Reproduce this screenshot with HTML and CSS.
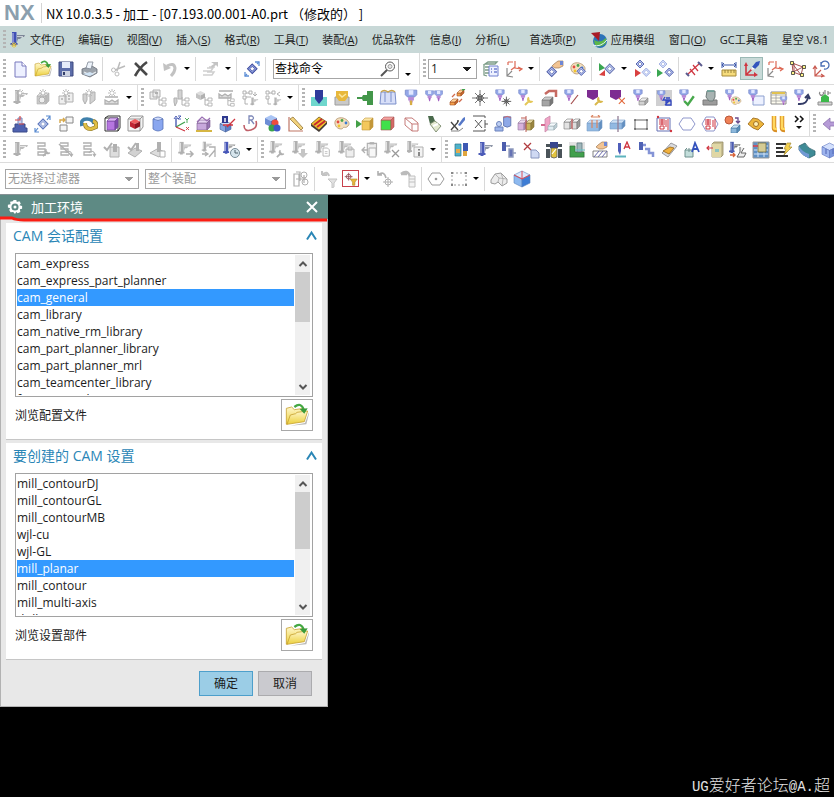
FILE: index.html
```html
<!DOCTYPE html>
<html lang="zh-CN">
<head>
<meta charset="utf-8">
<title>NX 10.0.3.5 - 加工</title>
<link rel="stylesheet" href="styles.css">
</head>
<body>
<header class="titlebar">
  <span class="brand">NX</span>
  <h1 class="title">NX 10.0.3.5 - 加工 - [07.193.00.001-A0.prt （修改的） ]</h1>
</header>

<nav class="menubar">
  <span class="grip"></span>
  <span data-icon="mill"></span>
  <a href="#">文件(<u>F</u>)</a>
  <a href="#">编辑(<u>E</u>)</a>
  <a href="#">视图(<u>V</u>)</a>
  <a href="#">插入(<u>S</u>)</a>
  <a href="#">格式(<u>R</u>)</a>
  <a href="#">工具(<u>T</u>)</a>
  <a href="#">装配(<u>A</u>)</a>
  <a href="#">优品软件</a>
  <a href="#">信息(<u>I</u>)</a>
  <a href="#">分析(<u>L</u>)</a>
  <a href="#" class="spaced">首选项(<u>P</u>)</a>
  <a href="#" class="with-icon"><span data-icon="globe"></span>应用模组</a>
  <a href="#">窗口(<u>O</u>)</a>
  <a href="#">GC工具箱</a>
  <a href="#">星空 V8.1</a>
</nav>

<div class="bar bar-tall">
  <div class="tools" data-tools=":: new open save print | cut delete | undo v | redo v | find |"></div>
  <div class="search">
    <input type="text" value="查找命令" aria-label="查找命令">
    <button type="button" aria-label="查找" data-icon="lens"></button>
  </div>
  <div class="tools" data-tools="w :::"></div>
  <select class="layer" aria-label="图层"><option>1</option></select>
  <div class="tools" data-tools="layers csys v | handgem paintgem | playgem v redgem greengem | distance v ruler axespick* csys nodes axesturn"></div>
</div>

<div class="bar">
  <div class="tools" data-tools=":: gmillnew gboxnew gpartsnew gtoolnew gopnew v ::: gparttree gtooltree gcubetree gruletree glinkmill glinkcube v ::: insert pocket plug booklet holder holders orange mesh holdmesh holdwrench redcube holdline tagwrench tagx holdcube holdtext holdcheck machine holdpaint holdsheet sheet holdturn greenbase"></div>
</div>

<div class="bar">
  <div class="tools" data-tools=":: column gembox linkbox swirl purplebox redbox cylinder axes3 purpleblock notebox hook colors angle slab palette greencube greenface sketch lamp xpen xbracket cylinders split plane cubes cutwide cutmid rect cutred hexagon hexred circlecube goldflange goldtubes more* ::: back"></div>
</div>

<div class="bar">
  <div class="tools" data-tools=":: gmill gcoil gcoilx gcoilturn gcheckpath gcheck gpath | gmillgo gmillplay millclock v ::: gmillturn gmilldown gmillcopy gmillpaste gpaste gmillx gmillinfo v ::: bluetool mill millstep xpage rig greenframe handhatch needlea bluestep goldplate boxa oldbox bluepage sheetbox lightning teal bluecube"></div>
</div>

<div class="bar bar-filter">
  <select class="filter" aria-label="选择过滤器"><option>无选择过滤器</option></select>
  <select class="filter wide" aria-label="选择范围"><option>整个装配</option></select>
  <div class="tools" data-tools="glinkasm | gfunnel snap* v gturnpoint gbrush | ghex gdash v | ghouse halfcube"></div>
</div>

<main class="canvas">
  <section class="dialog" aria-label="加工环境">
    <header class="dialog-head">
      <span data-icon="gear"></span>
      <h2>加工环境</h2>
      <button type="button" class="plain" aria-label="关闭" data-icon="close"></button>
      <svg class="marker" viewBox="0 0 328 6" preserveAspectRatio="none" aria-hidden="true"><path d="M0 2H12Q16 4 24 4H327" fill="none" stroke="#fb1d12" stroke-width="3"/></svg>
    </header>

    <div class="panel">
      <div class="panel-head"><h3>CAM 会话配置</h3><button type="button" class="plain" aria-label="折叠" data-icon="up"></button></div>
      <div class="listbox">
        <select size="8" aria-label="CAM 会话配置">
          <option>cam_express</option>
          <option>cam_express_part_planner</option>
          <option selected>cam_general</option>
          <option>cam_library</option>
          <option>cam_native_rm_library</option>
          <option>cam_part_planner_library</option>
          <option>cam_part_planner_mrl</option>
          <option>cam_teamcenter_library</option>
          <option>feature_machining</option>
        </select>
        <div class="scroll"><span data-icon="sup"></span><i class="thumb"></i><span data-icon="sdown"></span></div>
      </div>
      <div class="browse"><label for="b1">浏览配置文件</label><button type="button" id="b1" data-icon="folder"></button></div>
    </div>

    <div class="panel">
      <div class="panel-head"><h3>要创建的 CAM 设置</h3><button type="button" class="plain" aria-label="折叠" data-icon="up"></button></div>
      <div class="listbox">
        <select size="8" aria-label="要创建的 CAM 设置">
          <option>mill_contourDJ</option>
          <option>mill_contourGL</option>
          <option>mill_contourMB</option>
          <option>wjl-cu</option>
          <option>wjl-GL</option>
          <option selected>mill_planar</option>
          <option>mill_contour</option>
          <option>mill_multi-axis</option>
          <option>drill</option>
        </select>
        <div class="scroll"><span data-icon="sup"></span><i class="thumb long"></i><span data-icon="sdown"></span></div>
      </div>
      <div class="browse"><label for="b2">浏览设置部件</label><button type="button" id="b2" data-icon="folder"></button></div>
    </div>

    <footer class="actions">
      <button type="button" class="ok">确定</button>
      <button type="button">取消</button>
    </footer>
  </section>
  <p class="signature"><span>UG</span>爱好者论坛<span>@A.</span>超</p>
</main>
<script src="icons.js"></script>
</body>
</html>
```
FILE: styles.css
```css
* { box-sizing: border-box; }
html, body { height: 100%; }
body {
  margin: 0;
  display: flex;
  flex-direction: column;
  overflow: hidden;
  background: #fff;
  color: #1c1c1c;
  font: 12px/17px "Open Sans", "Noto Sans CJK SC", sans-serif;
}
h1, h2, h3, p { margin: 0; font-weight: 400; }
button, input, select { font: inherit; color: inherit; border-radius: 0; }
button { padding: 0; }
svg { display: block; flex: none; }
[data-icon] { display: flex; align-items: center; justify-content: center; flex: none; }

.titlebar { display: flex; align-items: center; height: 26px; flex: none; padding-left: 4px; }
.brand {
  width: 38px; height: 20px; line-height: 20px;
  border-right: 1px solid #d4d4d4;
  color: #8b9fae;
  font-family: "Liberation Sans", sans-serif;
  font-weight: 700; font-size: 22px;
}
.title { margin-left: 4px; font-size: 13px; font-family: "Noto Sans CJK SC", sans-serif; color: #000; white-space: pre; }

.menubar {
  display: flex; align-items: center; flex: none;
  height: 27px;
  background: #c8d8d7;
  font-size: 11px;
  white-space: nowrap; overflow: hidden;
}
.menubar a { color: inherit; text-decoration: none; margin-right: 14px; flex: none; }
.menubar > [data-icon] { width: 18px; margin: 0 4px 0 0; }
.menubar .spaced { margin-left: 6px; }
.menubar a.with-icon { display: flex; align-items: center; gap: 3px; }

.bar {
  display: flex; align-items: center; flex: none;
  height: 26px;
  border-bottom: 1px solid #dcdcdc;
  overflow: hidden;
}
.bar-tall { height: 32px; }
.bar-filter { height: 32px; padding-left: 5px; border-bottom-color: #879195; }
.tools { display: flex; align-items: center; align-self: stretch; flex: none; }
.tool {
  display: flex; align-items: center; justify-content: center;
  width: 23px; height: 23px;
  border: 0; background: none;
}
.tool.on { background: #c8dad8; border: 1px solid #9bb9b5; }
.tool.more { width: 17px; }
.bar-filter .tool.on { width: 17px; height: 17px; margin: 0 2px; background: #fff; border-color: #c8414b; }
.drop { display: flex; justify-content: center; align-items: center; width: 12px; height: 23px; border: 0; background: none; }
.drop::after { content: ""; border: 3px solid transparent; border-top-color: #000; border-bottom: 0; }
.drop.low { width: 18px; height: 11px; align-self: flex-end; margin-bottom: 4px; }
.sep { width: 1px; margin: 0 2px; height: 24px; background: #d8d8d8; }
.bar-tall .sep { margin-right: 3px; }
.grip {
  width: 3px; height: 20px; margin: 0 2px 0 3px; flex: none;
  background: repeating-linear-gradient(#b4b4b4 0 2px, transparent 2px 4px);
}
.edge { align-self: stretch; width: 1px; margin-left: 2px; background: #dcdcdc; }

.search { display: flex; align-items: center; width: 126px; height: 20px; margin-left: 4px; border: 1px solid #a6a6a6; flex: none; }
.search input { flex: 1; min-width: 0; border: 0; padding: 0 1px; background: none; outline: 0; color: #000; }
.search button { width: 20px; border: 0; background: none; }
select.layer, select.filter {
  appearance: none;
  height: 20px; padding: 0 2px; flex: none;
  border: 1px solid #a6a6a6;
  background-color: #fff;
  background-image: linear-gradient(to bottom right, currentColor 50%, transparent 51%), linear-gradient(to bottom left, currentColor 50%, transparent 51%);
  background-repeat: no-repeat;
  background-size: 4px 4px;
  background-position: right 5px center, right 9px center;
}
select.layer { width: 49px; margin-right: 2px; }
select.filter { width: 134px; margin-right: 6px; color: #9a9a9a; }
select.filter.wide { width: 141px; margin-right: 3px; }

.canvas { flex: 1; position: relative; min-height: 0; background: #000; }
.dialog { width: 328px; background: #e8e8e8; border: 1px solid #b2b2b2; border-top: 0; }
.dialog-head {
  position: relative;
  display: flex; align-items: center;
  height: 24px; margin: 0 -1px 4px; padding: 0 7px;
  background: #5e8a84; color: #fff;
}
.dialog-head h2 { flex: 1; margin-left: 8px; font-size: 13px; }
.marker { position: absolute; left: 0; bottom: -3px; width: 100%; height: 6px; }
.plain { border: 0; background: none; }
.panel { margin: 0 5px 3px; padding: 0 9px 8px; background: #fff; border-bottom: 1px solid #c6c6c6; }
.panel-head { display: flex; align-items: center; justify-content: space-between; height: 30px; margin: 0 -7px 0 -2px; padding-bottom: 5px; }
.panel-head h3 { font-size: 14px; line-height: 22px; color: #2a86b6; }
.listbox { display: flex; height: 144px; border: 1px solid #a2a2a2; padding: 1px; }
.listbox select { flex: 1; height: 140px; min-width: 0; border: 0; outline: 0; padding: 0; overflow: hidden; background: #fff; }
.listbox option { height: 17px; min-height: 17px; padding: 0; line-height: 17px; color: #1c1c1c; }
.listbox option:checked { background: #3399ff linear-gradient(#3399ff, #3399ff); color: #fff; -webkit-text-fill-color: #fff; }
.scroll { display: flex; flex-direction: column; width: 15px; margin: 0 1px; background: #f0f0f0; }
.scroll span { height: 17px; }
.scroll span:last-child { margin-top: auto; }
.thumb { height: 50px; background: #cdcdcd; }
.thumb.long { height: 57px; }
.browse { display: flex; align-items: center; justify-content: space-between; margin-top: 2px; }
.browse button { width: 32px; height: 32px; border: 1px solid #a8a8a8; background: #fff; }
.actions { display: flex; justify-content: flex-end; gap: 5px; padding: 8px 15px 10px; }
.actions button { width: 54px; height: 25px; background: #cacacf; border: 1px solid #ababae; }
.actions .ok { background: #9bcde6; border-color: #4d9fcb; }
.signature {
  position: absolute; right: 4px; bottom: 2px;
  font-size: 16px; font-weight: 300; line-height: 20px; color: #e2e2e2;
}
.signature span { font: 14px "Liberation Mono", monospace; }
```
FILE: icons.js
```js
const p = (d, fill = 'none', stroke = 'none', w = 1) =>
  `<path d="${d}" fill="${fill}" stroke="${stroke}" stroke-width="${w}"/>`;
const g = (x, y, s, body) => `<g transform="translate(${x} ${y}) scale(${s})">${body}</g>`;
const c = (x, y, r, fill, stroke = 'none') => `<circle cx="${x}" cy="${y}" r="${r}" fill="${fill}" stroke="${stroke}"/>`;
const G = '#b0b0b0', L = '#dedede', R = '#cf3540', N = '#4c5aa6';

/* Shared parts */
const cube = (x, y, s, t, l, r, k = 'none') =>
  p(`M${x} ${y + s / 4}L${x + s / 2} ${y}L${x + s} ${y + s / 4}L${x + s / 2} ${y + s / 2}z`, t, k, .6) +
  p(`M${x} ${y + s / 4}L${x + s / 2} ${y + s / 2}V${y + s}L${x} ${y + s * .75}z`, l, k, .6) +
  p(`M${x + s} ${y + s / 4}L${x + s / 2} ${y + s / 2}V${y + s}L${x + s} ${y + s * .75}z`, r, k, .6);
const block = (x, y, w, h, f, t, r, k) =>
  p(`M${x} ${y + 3}h${w}v${h}h${-w}z`, f, k, .6) + p(`M${x} ${y + 3}l3 -3h${w}l-3 3z`, t, k, .6) +
  p(`M${x + w} ${y + 3}l3 -3v${h}l-3 3z`, r, k, .6);
/* Cutter body with its side arm */
const mill = (a, b) => p('M4 1h4.500v12H4z', a) + p('M5 2v10', 'none', '#ffffff', .7) +
  p('M9 4h8l-1 2h-2l-2 2h-2l-1 3z', b) + p('M9 5.500h6', 'none', '#ffffff', .6) + p('M2.500 12h7v2h-2v1h-3v-1h-2z', a);
const spark = (k = '#b5b5b5') => p('M9 0v8M5 4h8M6 1l6 6M12 1L6 7', 'none', k, .9) + c(9, 4, 1.3, '#fff');
const holder = p('M2 1h10v4l-2 2H4L2 5z', '#93a7e8', '#7486c8', .7) + p('M5 1h4v4H5z', '#e0e7ff') + p('M4.500 7h5v3h-5z', '#b78bd8') + p('M5.500 10h3l-1 4h-1z', '#a561c4');
const wrench = k => p('M1 9l5-5M5 1.5a2.5 2.5 0 1 0 3.5 3.5', 'none', k, 2);
const tree = k => p('M1 0v8h4M1 3h4', 'none', k) + p('M4 1h4v3H4zM4 6h4v3H4z', '#fff', k, .9);
const gem = (k = N, f = '#b4c2f2') => p('M5 0l5 5-5 5-5-5z', f, k, 1.1) + p('M5 2.500l2.500 2.500L5 7.500 2.500 5z', '#fff', k, .8);
const page = k => p('M0 0h5l2 2v7H0z', '#fff', k) + p('M2 4h3M2 6h3', 'none', k, .8);
const ex = k => p('M1 1l7 7M8 1L1 8', 'none', k, 1.3);
const turn = k => p('M1 5a4 4 0 0 1 7 0v3M6 6l2 3 2-3', 'none', k, 1.3);
const check = k => p('M1 5l3 3 5-7', 'none', k, 2);
const coil = p('M3 2h8v3H4v3h7v3H4v3h8', 'none', G, 1.3);
const pal = p('M2 9C1 4 6 2 10 3s8 5 5 8-4 0-5 2-7 1-8-4z', '#f3dfbe', '#b2936c', .8) +
  c(5, 7, 1.4, '#e54b42') + c(9, 5.500, 1.400, '#4ca64b') + c(13, 8, 1.4, '#3d7bd3') + c(6, 11, 1.400, '#f0c52f');
const hand = p('M8 4l4-3h5v5l-4 2H9l-3-2z', '#f2c493', '#a27a52', .7) + p('M14 1h3v4h-3z', '#6e87d5');
const folder = '<defs><linearGradient id="paper" x2="0" y2="1"><stop stop-color="#fff7cb"/><stop offset="1" stop-color="#ecd03c"/></linearGradient></defs>' +
  p('M4 17l11-2 3-8v1l-2 8z', '#b9b9b9') +
  p('M1 16V4l4-1 2 2 7-1v4z', 'url(#paper)', '#c5a02e', .6) + p('M1.500 16L4 9l4-1 1-1 8-1-2.500 8z', 'url(#paper)', '#c5a02e', .6) +
  p('M7 3q5-4 7 2', 'none', '#45a843', 1.7) + p('M11 4.500l6-.5-2.500 4z', '#3a9b3b');
const gm = mill(G, '#bdbdbd');
const clip = p('M2 2h8v10H2z', '#eee', G) + p('M4 1h4v2H4z', G);

const icons = {
  mill: mill('#4c5cb8', '#8f97a8'),
  millmenu: mill('#3f4fb5', '#7d8697') + p('M6 11v6M3 14h6M4 12l4 4M8 12l-4 4', 'none', '#e8c83e', .9),
  globe: c(10, 10, 7, '#2c72b8') + p('M4 9q6 4 12-2v5q-6 6-11 2z', '#5eb748') + p('M3 14q7 3 14-5', 'none', '#dff0ff', 1) + p('M1 2l9-1-1 9-3-3z', '#a91c27'),
  lens: c(11, 6.5, 4.500, '#fff', '#555') + p('M8 10l-6 6', 'none', '#555', 2) + c(11, 6.500, 2, '#e8e8e8', '#999'),
  new: p('M4 2h7l4 4v11H4z', '#edf0ff', '#7878bd') + p('M11 2v4h4', '#fff', '#7878bd'),
  open: folder, folder,
  save: p('M2 2h14v14H2z', '#5c6da9', '#3e4b80') + p('M5 2h8v6H5z', '#e6ecfa') + p('M5 11h8v5H5z', '#cdd3e2') + p('M6 12h2v3H6z', '#34406b'),
  print: p('M2 9l10-3 5 3v4l-7 4-8-3z', '#9ca3ab', '#696f78', .8) + p('M6 8l2-6h5l-2 7z', '#eef4fb', '#7d8793', .8) + p('M4 12l6 3 6-3', 'none', '#e8ecef', 1.3) + p('M3 14l7-2 4 2-5 2z', '#d1e4f5'),
  cut: p('M11 2L8 11M16 6L6 10', 'none', '#bbb', 1.5) + c(4.500, 10, 2, 'none', '#bbb') + c(8, 14, 2, 'none', '#bbb'),
  delete: p('M3 3l12 12M15 2Q8 7 3 16', 'none', '#484848', 2.600),
  undo: p('M6 6q7-4 8 2 0 4-4 8', 'none', '#c2c2c2', 3) + p('M2 3l1 8 7-3z', '#c2c2c2'),
  redo: p('M1 15h9l2-3H5M1 11h8l2-3H5M7 7h6', 'none', '#cfcfcf', 1.500) + p('M9 2h7v5l-2-2-4 3-1-2 3-2z', '#c4c4c4'),
  find: g(4.500, 4, .95, gem('#3c4a9c', '#8d9ee0')) + p('M2 12v4h4M16 6V2h-4', 'none', '#5d8ed6', 1.300) + p('M2 16l2-2M16 2l-2 2', 'none', '#5d8ed6', 1.300),
  layers: p('M3 4l3-2h9l-2 2zM3 7h5M3 10h4M3 13h4M2 4v11l3 1', 'none', '#7d9d88', 1.300) + p('M7 6h9v10H7z', '#edf1ff', '#7080cf') + p('M9 9h1M12 9h3M9 12h1M12 12h3', 'none', '#7080cf', 1.500),
  csys: p('M3 2h5M3 2v3M10 1v7l6 1M10 7l-4 3M13 7l4 2-3 2', 'none', '#dd6955', 1.200) + p('M2 8v8l6 1M2 16l5-5', 'none', '#8a8a8a', 1.200),
  handgem: g(1, 7, .95, gem()) + hand,
  paintgem: pal + g(8, 7, .85, gem()),
  playgem: p('M1 3l6 5-6 3z', '#3aa651') + p('M1 15l6-5v6z', '#d94040') + g(7, 4, .95, gem('#6371ae', '#c3cef5')),
  redgem: g(3, 0, .8, gem()) + p('M2 9l6 4-6 4z', '#d94040') + g(9, 8, .85, gem('#9dacdf', '#d2dcfa')),
  greengem: g(3, 0, .8, gem('#9dacdf', '#d2dcfa')) + p('M1 9l6 4-6 4z', '#3aa651') + g(9, 8, .85, gem()),
  distance: p('M3 14L15 3M5 9l5 6M8 5l5 6', 'none', R, 1.200) + p('M1 13l3 3M13 2l4 4', 'none', '#5c5c8f', 2),
  ruler: p('M2 5h14M2 2v6M16 2v6M4 3L2 5l2 2M14 3l2 2-2 2', 'none', '#3b56a9') + p('M2 10h14v6H2z', '#f6dc7c', '#a78b39') + p('M5 10v3M8 10v3M11 10v3M14 10v3', 'none', '#836e2d', .8),
  axespick: p('M3 5v10h9M3 15l6-6', 'none', R, 1.600) + p('M1 6l2-4 2 4zM11 12l4 3-4 2z', R) + p('M9 7l4-5 4-1-1 4-4 4z', '#3254bd') + p('M9 7l3 2-4 1z', '#fff'),
  nodes: p('M3 3l11 4-2 8-8-3zM3 3l9 12M4 12L14 7M5 3v9', 'none', '#a85252') + [[3, 3], [15, 7], [13, 15], [4, 13]].map(q => p(`M${q[0] - 1.500} ${q[1] - 1.500}h3v3h-3z`, '#fff58a', '#333', .8)).join(''),
  axesturn: p('M3 7v9h8M3 16l6-6M1 9l2-3 2 3M9 14l3 2-3 1', 'none', '#c9594f', 1.200) + p('M9 5a4 4 0 1 1 3 4M9 2v4h4', 'none', '#4b6fb5', 1.300),
  gmillnew: gm + spark(), gboxnew: block(3, 4, 9, 8, '#c9c9c9', L, '#bbb', G) + c(8, 11, 3, '#eee', G) + spark(),
  gpartsnew: p('M2 7h7v8H2zM8 4h8v9H8z', '#eee', G) + p('M4 10h2M11 7h2M11 10h2', 'none', G, 1.500) + spark(),
  gtoolnew: p('M3 5h4v6l-2 4-2-4zM10 3h5v8l-5 4z', '#d2d2d2', G) + spark(),
  gopnew: p('M2 8h13M2 11v4h13v-4l-3 2-3-2-3 2z', '#ddd', G, 1.300) + spark(),
  gparttree: p('M1 3h7v7H1zM4 1h7v7H4z', '#eee', G) + p('M6 4h3', 'none', G, 2) + g(9, 8, 1, tree(G)),
  gtooltree: p('M2 9h3v4l-2 4-1-4zM6 1h4v9H6z', '#d2d2d2', G) + g(9, 8, 1, tree(G)),
  gcubetree: cube(1, 2, 9, L, '#c2c2c2', G) + g(9, 8, 1, tree(G)),
  gruletree: p('M1 2h14M1 9V5l3 2 3-2 3 2 3-2v4z', '#ddd', G, 1.300) + g(9, 9, .9, tree(G)),
  glinkmill: p('M2 2h3v3H2zM8 2h3v3H8zM2 7h3v3H2zM5 4h3M5 8h5M4 10v5h3M14 3v4M12 5l2 2 2-2', 'none', G) + g(8, 8, .55, gm),
  glinkcube: p('M2 2h3v3H2zM8 2h3v3H8zM2 7h3v3H2zM5 4h3M4 10v5h3M16 3l-3 2 3 2', 'none', G) + g(8, 8, .55, gm),
  insert: p('M1 8h16v9H1z', '#6fd7cd') + p('M5 1h8v9l-4 5-4-5z', '#2f3b9b'),
  pocket: p('M2 8h14v8H2z', '#c9c9c9', '#9d9d9d') + p('M3 2h12v6l-3 4H6L3 8z', '#e8b83c') + p('M6 5l3 3 4-3', 'none', '#fbe8a2', 1.500),
  plug: p('M17 2v14h-6v-4H7l-1-2H1V8h5l1-2h4V2z', '#43974a'),
  booklet: p('M2 3h14l1 12H1zM6 3v10M12 3v10', '#d8dff8', '#7b8fca') + p('M2 3q3-3 7 0 4-3 7 0', 'none', '#c8a34c', 1.400),
  holder: g(1, 0, 1.150, holder + p('M6 10h2v4H6z', '#d7ac44')), holders: g(-1, 1, .8, holder) + g(8, 1, .8, holder),
  orange: block(9, 1, 4, 3, '#f3a04b', '#ffd49c', '#c2672d', '#a55227') + block(2, 10, 5, 3, '#f3a04b', '#ffd49c', '#c2672d', '#a55227') + p('M4 8l3-3M11 13l3-3', 'none', '#d06a4d', 1.300) + p('M14 1l3-1', 'none', '#3ca24a', 1.5),
  mesh: p('M9 1v16M1 9h16M4 4l10 10M14 4L4 14M9 5l4 4-4 4-4-4z', 'none', '#777') + c(9, 9, 2, '#777', '#555'),
  holdmesh: g(0, 0, .85, holder) + g(7, 7, .6, p('M9 1v16M1 9h16M4 4l10 10M14 4L4 14M9 5l4 4-4 4-4-4z', 'none', '#555', 1.500)),
  holdwrench: g(0, 0, .85, holder) + g(7, 7, 1, wrench('#e4c758')),
  redcube: block(2, 8, 8, 6, '#a5a5a5', '#ccc', '#777', '#777') + p('M5 5l4-3h7v6', 'none', '#c66a62', 2.5),
  holdline: g(0, 0, .85, holder) + p('M8 15l7-9', 'none', '#a34b4b', 1.200),
  tagwrench: p('M1 1h11v7l-5 3-6-3z', '#7d2c91') + g(8, 7, 1, wrench('#d9b84c')),
  tagx: p('M1 1h11v7l-5 3-6-3z', '#7d2c91') + g(9, 8, .85, ex('#e2693c')),
  holdcube: g(0, 0, .85, holder) + block(7, 9, 6, 4, '#d2d2d2', '#eee', '#aaa', '#888'),
  holdtext: p('M1 1h16v16H1z', '#cfcfd1') + g(1, 1, .75, holder) + p('M10 8l-2 3h7l-5 5M11 12h5v4h-5zM11 9h4', 'none', '#3348c2', 1.300),
  holdcheck: g(0, 0, .85, holder) + g(5, 6, 1.200, check('#47a84c')),
  machine: p('M2 11h14v5H2z', '#9c9c9c', '#7b7b7b') + p('M6 2h8v6l-2 4H8L5 8z', '#a8b3b2', '#6d7a78') + p('M6 2h7', 'none', '#68a098', 1.500),
  holdpaint: g(0, 0, .8, holder) + g(6, 6, .68, pal), holdsheet: p('M6 7h11v9H6z', '#edf1ff', '#8da0cf') + g(0, 0, .85, holder),
  sheet: p('M1 3h15v12H1z', '#fffdf0', '#8a8a8a') + p('M1 6h15M1 9h15M1 12h15M6 3v12', 'none', '#a0a0a0', .8) + p('M2 4h13', 'none', '#e1c250', 2) + g(9, 7, .65, holder),
  holdturn: g(0, 0, .85, holder) + p('M5 15q9 1 10-7M12 9l3-3 2 4', 'none', '#333b66', 2),
  greenbase: p('M2 13h14v3H2z', '#d4d4d4', '#8f8f8f') + p('M5 13V8l4-3 4 3v5z', '#3cb84a') + p('M4 3a2 2 0 1 0 3 0M9 1v4M12 2v4M12 4h3', 'none', '#888', 1.200),
  column: p('M4 9h10v4h2v4H2v-4h2z', '#4f62b0', '#3b4a89') + p('M7 3h4v6H7z', '#c9d3f4', '#7987b9') + p('M4 5h5V1M8 9h5', 'none', '#d74848', 1.200),
  gembox: g(4, 4, 1, gem('#5f78bd', '#cbd7f4')) + p('M1 13v4h4M16 5V1h-4M1 17l3-4M16 1l-3 4', 'none', '#5b8cd1', 1.200),
  linkbox: p('M9 2h7v6H9zM3 10h7v6H3z', '#f5f5f5', '#888') + p('M3 8V5h5M6 3l2 2-2 2', 'none', '#d6a84a', 1.400),
  swirl: p('M2 11Q0 4 7 4q6 0 7 5', 'none', '#3f80ab', 3.5) + p('M5 8q0 6 6 6l5-2q1-5-3-6', 'none', '#8a7429', 4) + p('M5 8q0 6 6 6l5-2q1-5-3-6', 'none', '#e0bf45', 2.8),
  purplebox: p('M2 3h13v13H2zM2 3l3-2h12v12l-2 3', 'none', '#333') + block(4, 3, 8, 9, '#b676e0', '#dcb2f5', '#7e4bab', '#6e3f98'),
  redbox: p('M2 4l3-3h12v11l-3 4H2zM2 4h12v12M14 4l3-3', '#f3f3f3', '#999') + cube(4, 4, 10, '#f05c5e', '#c02533', '#8f1420'),
  cylinder: p('M4 4v10q5 4 10 0V4z', '#89a6ef', '#5772b8', .8) + p('M4 4q5-4 10 0-5 3-10 0z', '#d3defb', '#5772b8', .8),
  axes3: p('M4 3v9', 'none', '#3c50ad', 1.300) + p('M4 12l9-5', 'none', '#3fa14c', 1.300) + p('M4 12l9 4', 'none', R, 1.300) + p('M2 4l2-3 2 3M6 1h3l-3 3h3', 'none', '#3c50ad', .9) + p('M13 3l2 2 2-2M15 5v3', 'none', '#3fa14c', .9) + p('M14 12l3 3M17 12l-3 3', 'none', R, .9),
  purpleblock: block(2, 5, 10, 7, '#c8a8dc', '#e7d6f2', '#9774b3', '#79598f') + p('M2 7l5-5 5 4 3-3', 'none', '#9a6fb3', 1.200) + p('M1 16h16', 'none', '#d6b643', 2),
  notebox: cube(2, 6, 11, '#cfe0fb', '#86a7e0', '#5c7fc6', '#47639c') + p('M4 1h6v7H4z', '#2f3a90') + p('M7 3v4', 'none', '#fff', 1.500) + p('M9 12l8-8M5 10h10', 'none', R, 1.300),
  hook: p('M3 10q0 7 7 5 7-2 5-9', 'none', '#c0606a', 1.600) + p('M8 9V1h3q3 2 0 4H8M10 5l3 4', 'none', '#7d88b8', 1.300),
  colors: cube(1, 0, 12, '#a9c4f4', '#6d8ed6', '#4a6ab7') + c(11, 8, 3.500, '#ef4b3e') + c(8, 13, 3.500, '#3ca24a') + c(13, 13, 3.500, '#3f58c8'),
  angle: p('M2 2v14h14', 'none', '#bf7665', 1.200) + p('M3 4l3-2 10 11-2 2z', '#f1d27c', '#a08346', .9),
  slab: p('M1 9l8-7 8 5-8 8z', '#f0c22d', '#75571f', .8) + p('M4 10l8-6M7 12l8-6', 'none', '#c82931', 2) + p('M1 9v2l8 6 8-8V7l-8 8z', '#443b35'),
  palette: pal,
  greencube: p('M0 5l6 4-6 4z', '#43a047') + block(6, 3, 8, 9, '#f3c85c', '#fbe6a5', '#c39739', '#c39739'),
  greenface: block(2, 2, 10, 10, '#3fe04b', '#f6a3a0', '#d56a66', '#a55'),
  sketch: p('M3 3h7l6 5v8h-6L3 10zM3 3l7 6M10 9v7M10 9l6 0', 'none', '#c57a78', 1),
  lamp: p('M3 1l5 0 2 5-5 3z', '#4a6a4c') + p('M5 9l5-3 6 5-5 6z', '#e4ead0', '#7b8a6d', .9) + p('M8 11l5-2', 'none', '#fff', 2),
  xpen: p('M3 7l7 8M10 7l-7 8M9 6h2', 'none', '#444', 1.300) + p('M10 10l5-7 2-1v3l-5 6z', '#5577c7') + p('M3 16h8l4-3', 'none', '#777', .9),
  xbracket: p('M4 5l7 8M11 5l-7 8M2 1h12v2M2 16h12v-2M14 5v8M14 9h3', 'none', '#555', 1),
  cylinders: g(6, 0, .9, p('M4 2v10q4 3 8 0V2z', '#8ea9e8', '#5d74b0') + p('M4 3q4-3 8 0', 'none', '#d56363')) + c(5, 9, 2.500, '#bed0f5', '#6c82bb') + p('M1 12h8v4H1z', '#9eb6ec', '#6c82bb'),
  split: block(1, 5, 6, 7, '#d8b2dd', '#efdcf2', '#b187b8', '#957c9d') + block(9, 5, 5, 7, '#c7b25e', '#eadca3', '#9a8640', '#837336') + p('M9 1v16M4 3h5', 'none', '#bb5b52', 1),
  plane: p('M5 4l5-3v12l-5 4z', '#f0a4c6', '#c98baa', .8) + block(8, 8, 6, 4, '#e2eef3', '#f5fafc', '#bccdd4', '#9babb2') + p('M1 10h4', 'none', '#d36a8f', 2),
  cubes: block(1, 4, 6, 7, '#e3e3e3', '#f6f6f6', '#bbb', '#777') + block(9, 4, 5, 7, '#ddd', '#f6f6f6', '#999', '#777') + p('M9 4v10', 'none', '#cf6a6a', 1.300),
  cutwide: block(1, 5, 12, 8, '#92b9e2', '#cfe2f5', '#628fc0', '#7aa0ca') + p('M6 5v8M11 5v8M5 2h9M5 2l2-2M14 2l-2-2', 'none', '#d98562', 1.200),
  cutmid: block(1, 5, 12, 6, '#92b9e2', '#cfe2f5', '#628fc0', '#7aa0ca') + p('M9 1v16', 'none', '#937e95', 1.300),
  rect: p('M3 5h12v9H3z', 'none', '#666', 1) + [[3, 5], [15, 5], [3, 14], [15, 14]].map(q => c(q[0], q[1], 1, '#666')).join(''),
  cutred: p('M2 3h13v13H2z', 'none', '#6570b4') + p('M4 5h6M4 7h6M7 4v6M4 9h6M5 11h4v3H5zM11 5v7M13 4v11', 'none', R, 1) + c(3, 2, 1.200, R) + c(16, 16, 1.200, R),
  hexagon: p('M5 3h8l4 6-4 6H5L1 9z', 'none', '#8f97cc', 1),
  hexred: p('M5 2h8l4 7-4 7H5L1 9z', 'none', '#8f97cc', 1) + p('M4 5h6M4 7h6M7 4v6M4 9h6M5 11h4v3H5zM12 5v7M14 4v10', 'none', R, 1),
  circlecube: c(5, 5, 4, '#ef8157', '#b9573a') + block(7, 10, 6, 5, '#8db8dc', '#cfe3f3', '#5b8fba', '#487aa3') + p('M11 3h3v4M12 6l2 2 2-2', 'none', '#694b8c', 1.300),
  goldflange: p('M1 9l5-6 5 1 6 5-6 6-5-2z', '#ecb53c', '#a17024', .9) + c(9, 9, 2.500, '#fff0b6', '#a17024'),
  goldtubes: p('M4 1v12q0 2 3 2M12 1v12q0 2 3 2', 'none', '#d98f25', 4.5) + p('M4 1v12q0 1 3 1M12 1v12q0 1 3 1', 'none', '#ffd85f', 2.5),
  more: p('M5 1l3 3-3 3M10 1l3 3-3 3', 'none', '#111', 1.500) + p('M6 11h6l-3 3z', '#111'),
  back: p('M2 9l7-6v4h7v4H9v4z', '#b69bd7', '#8d74ae', .8),
  gmill: gm, gcoil: coil + g(8, 7, .9, wrench(G)), gcoilx: coil + p('M2 3l13 12', 'none', G, 1.500) + g(8, 8, .8, turn(G)), gcoilturn: coil + g(8, 8, .8, turn(G)),
  gcheckpath: p('M7 6h9v10H7z', '#ddd', G) + g(0, 1, 1, check(G)) + p('M10 3h4v8h-4z', G),
  gcheck: p('M2 12l7-5 7 3-7 6z', '#d2d2d2', G) + g(1, 1, 1, check(G)) + p('M10 2h3v8h-3z', G),
  gpath: p('M1 12l7-4 8 3-6 5z', '#ddd', G) + p('M8 1h4v10H8z', G) + p('M11 10h5v6h-5z', '#fff', G),
  gmillgo: g(-1, 0, .9, gm) + p('M9 13h7M13 10l3 3-3 3', 'none', G, 1.500), gmillplay: g(0, 0, .7, gm) + p('M9 6h6v10M9 16l6-7M2 13h5M5 11l3 2-3 2', 'none', G, 1.300),
  millclock: g(-2, 0, .85, mill('#4656b8', '#9a9a9a')) + c(12, 12, 4.500, '#d6e5ed', '#778c98') + p('M12 9v3h3', 'none', '#51626c'),
  gmillturn: g(-2, -1, .9, gm) + g(7, 8, .9, wrench(G)), gmilldown: g(-2, -1, .9, gm) + p('M9 8h4v4h3l-5 5-5-5h3z', '#c5c5c5'),
  gmillcopy: g(-2, -1, .9, gm) + g(8, 7, .9, page(G)), gmillpaste: g(-2, -1, .9, gm) + p('M8 8h8v8H8zM10 6h4v3h-4z', '#eee', G),
  gpaste: g(4, 0, 1.150, clip) + p('M1 9h6M4 6L1 9l3 3', 'none', G, 1.300) + p('M8 7h7v9H8z', '#f7f7f7', G), gmillx: g(-2, -1, .9, gm) + g(7, 8, 1, ex('#999')),
  gmillinfo: g(-3, -1, .85, gm) + p('M7 6h9v10H7z', '#f2f2f2', G) + p('M12 8v1.500M12 11v4', 'none', '#888', 2),
  bluetool: p('M2 3h6v12H2z', '#4fb2ca', '#2b728b', .7) + p('M3 8h4v4H3z', '#e4aa4c') + p('M10 2h5v8h-5z', '#3d58b3') + p('M10 10h4v5h-4z', '#dfa53e'),
  millstep: p('M3 1h4v9H3z', '#4c5dad') + p('M7 5h4M10 8h4v8h-4zM14 12h3', '#6673b4', '#8f9abd', 1.400),
  xpage: g(1, 1, 1, ex('#b13c40')) + p('M9 9h5l3 3v5H9z', '#cfd9f3', '#8795be'),
  rig: p('M1 3h16v3H1zM1 8h4v9H1zM13 8h4v9h-4z', '#4a5359') + p('M5 1h8v6H5z', '#38468e') + p('M6 7h6v9l-3 1-3-1z', '#e2c33f', '#555', .8) + p('M7 13l4-5', 'none', '#fff', 1.200),
  greenframe: p('M1 1h16v16H1z', '#e2e2e2') + p('M2 5v11h14v-5H7V5z', '#41a04d', '#2f7338', .7) + p('M9 2h5v9H9z', '#9fb7bb', '#607a80', .8) + p('M7 9h10', 'none', '#63c2c9'),
  handhatch: g(-1, 0, 1, hand) + p('M2 10h14v6H2z', '#fff', '#666', .8) + p('M3 16l5-6M7 16l5-6M11 16l5-6', 'none', '#6b6bac'),
  needlea: p('M4 2h3v8l-1 4-2-4z', '#4e5dba') + p('M1 15.500h11', 'none', '#5cb3bd', 2) + p('M10 8l3-7 3 7M11 6h4', 'none', R, 1.300),
  bluestep: p('M2 1h4v8H2z', '#4f62b5') + p('M6 4h3M8 8h4v4h4v4', 'none', '#8494d6', 2.5),
  goldplate: p('M2 12l9-10 6 3-9 11z', '#d9dadd', '#85878c', .8) + p('M3 10l7-4 4 1-5 6z', '#f1b13c', '#a06f24', .9),
  boxa: p('M2 9h8v7H2zM2 9l2-2M6 7v4', '#c3dedb', '#6f918e') + p('M9 11l3-9 4 9M10 8h5', 'none', '#3452bd', 1.800),
  oldbox: p('M6 3h9v13H6z', '#d9cf96', '#948c63', .8) + p('M6 3l2-2h9v13l-2 2', '#c5bc90', '#948c63', .8) + p('M6 3h9v13H6z', '#e0d7a4') + p('M9 8h4v3H9z', '#8ac2c0') + p('M1 7h6M3 5L1 7l2 2', 'none', R, 1.200),
  bluepage: g(-2, 0, .8, mill('#4c5cb0', '#777')) + p('M1 14h5M4 12l2 2-2 2', 'none', '#d86338', 1.300) + p('M11 6v5l-3 5h7l2-4h-5l3-5', '#eee', '#666', 1),
  sheetbox: p('M1 1h16v16H1z', '#5f91c6', '#9a9a9a') + p('M2 5h14M2 9h14M2 13h14M6 2v14M12 2v14', 'none', '#d4e4f7') + p('M6 2h8v9H6z', '#d5cb93', '#6f693e', .8) + p('M1 5h5', 'none', R, 1.500),
  lightning: p('M1 3h10M1 7h7M1 11h9M1 15h12', 'none', '#333', 1.800) + p('M12 2h4l-2 4h3l-8 8 2-6H9z', '#f4d14e', '#a48b38', .7),
  teal: p('M1 5l6-3q3 6 10 8v4l-6 3Q4 14 1 9z', '#3f8b96', '#2c626c', .8) + p('M1 9q3 6 10 8v-4Q4 11 1 5z', '#7199d4'),
  bluecube: cube(1, 2, 15, '#d2dffc', '#9db4ee', '#7a95dc', '#6075c0') + p('M5 8v5M12 8v5', 'none', '#5b71bd', 1.200),
  glinkasm: p('M2 4h5v12H2zM4 2h4v9', 'none', G, 1.200) + c(12, 5, 3, 'none', G) + c(13, 12, 3, 'none', G) + p('M4 9h10M12 5v8', 'none', G, 1.200),
  gfunnel: p('M2 5q5-5 7 1M2 5h5M2 5V1', 'none', '#c4c4c4', 2) + p('M8 9h9l-3 4v4l-2 1v-5z', '#e2e2e2', '#c4c4c4'),
  snap: c(6, 6, 3, 'none', '#8d3f4a') + p('M6 1v10M1 6h10', 'none', '#8d3f4a') + p('M8 9h9l-3 4v4h-3v-4z', '#e9b83c', '#b28726', .8),
  gturnpoint: p('M2 5q6-5 8 3M2 1v4h4', 'none', G, 1.600) + c(12, 12, 3, 'none', G) + p('M12 7v10M7 12h10', 'none', G),
  gbrush: p('M2 4q6-5 9 2M2 4h6', 'none', '#bbb', 2.5) + p('M10 6h6v11h-6zM10 9h6M10 12h6', '#f3f3f3', '#c0c0c0'),
  ghex: p('M5 3h8l4 6-4 6H5L1 9z', 'none', '#9a9a9a', 1) + c(9, 9, 1.300, '#999'),
  gdash: `<path d="M2 3h14v12H2z" fill="none" stroke="#999" stroke-dasharray="2 2"/>` + p('M1 2h2v2H1zM15 2h2v2h-2zM1 14h2v2H1zM15 14h2v2h-2z', '#888'),
  ghouse: p('M1 10l4-6 6-1 6 6v4l-5 3-4-4-3 2-4-1z', '#ececec', '#9c9c9c') + p('M5 4l4 4 8 1M9 8l-1 4M11 3l2 6-1 7', 'none', '#aaa', .8),
  halfcube: cube(1, 1, 16, '#dbe9ff', '#8db9ef', '#3d7dd5', '#5b83bd') + p('M9 1v8L1 5M9 9l8-4', 'none', '#e04b54', 1),
  gear: p('M7.500 1h3l.5 2.500 3-1 1.500 2.500-1.500 2L17 8v3l-2.500.5.5 3-3 1.500-1.500-1.500L9 17l-2-2.500-3 .5-1.500-2.500 1-2L1 9.500v-3L4 6l-.5-3 3-.5z', '#fff') + c(9, 9, 4, '#5e8a84') + c(9, 9, 1.700, '#fff'),
  close: p('M4 4l10 10M14 4L4 14', 'none', '#fff', 2),
  up: p('M5 12.500l4.500-7 4.500 7', 'none', '#2a86b6', 2),
  sup: p('M5.500 11L9 7.500l3.500 3.500', 'none', '#555', 2),
  sdown: p('M5.500 7L9 10.500 12.500 7', 'none', '#555', 2)
};

const svg = (name, size = 18) =>
  `<svg width="${size}" height="${size}" viewBox="0 0 18 18" aria-hidden="true">${icons[name] || ''}</svg>`;

document.querySelectorAll('[data-icon]').forEach(el => {
  const name = el.dataset.icon;
  el.innerHTML = svg(name === 'mill' ? 'millmenu' : name, name === 'folder' ? 24 : name === 'gear' ? 16 : 18);
});

document.querySelectorAll('[data-tools]').forEach(el => {
  el.innerHTML = el.dataset.tools.split(' ').map(t => {
    if (t === '::') return '<span class="grip"></span>';
    if (t === ':::') return '<span class="edge"></span><span class="grip"></span>';
    if (t === '|') return '<span class="sep"></span>';
    if (t === 'v') return '<button type="button" class="drop" aria-label="▾"></button>';
    if (t === 'w') return '<button type="button" class="drop low" aria-label="▾"></button>';
    const name = t.replace('*', '');
    const state = name === 'more' ? ' more' : t === name ? '' : ' on';
    return `<button type="button" class="tool${state}" aria-label="${name}">${svg(name, name === 'snap' ? 14 : 18)}</button>`;
  }).join('');
});
```
